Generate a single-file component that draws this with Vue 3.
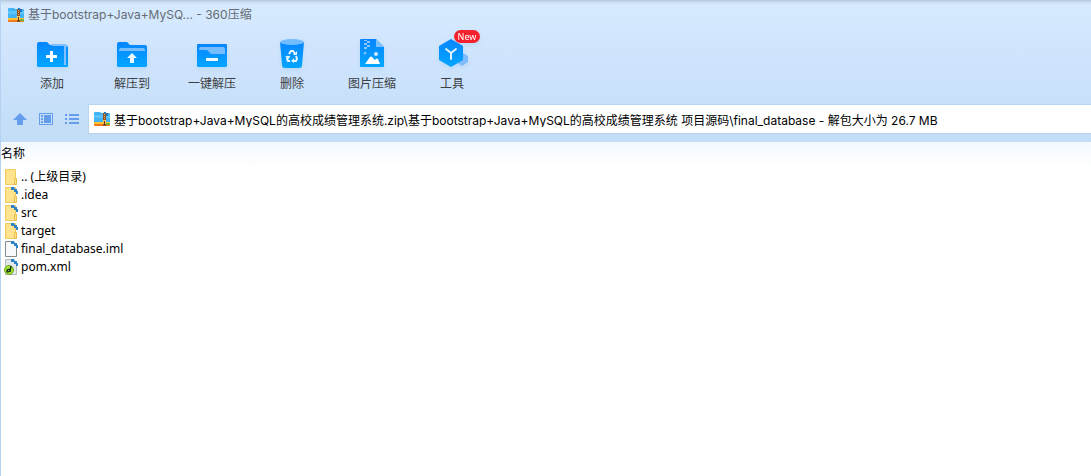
<script setup>
import { h } from 'vue'

const tools = [
  { id: 'add', label: '添加' },
  { id: 'extract', label: '解压到' },
  { id: 'quick', label: '一键解压' },
  { id: 'trash', label: '删除' },
  { id: 'image', label: '图片压缩' },
  { id: 'kit', label: '工具', badge: 'New' },
]

const files = [
  { name: '.. (上级目录)', kind: 'folder', linked: false },
  { name: '.idea', kind: 'folder', linked: true },
  { name: 'src', kind: 'folder', linked: true },
  { name: 'target', kind: 'folder', linked: true },
  { name: 'final_database.iml', kind: 'page', linked: true },
  { name: 'pom.xml', kind: 'xml', linked: true },
]

const path =
  '基于bootstrap+Java+MySQL的高校成绩管理系统.zip\\基于bootstrap+Java+MySQL的高校成绩管理系统 项目源码\\final_database - 解包大小为 26.7 MB'

const ArchiveIcon = () =>
  h('svg', { width: 16, height: 14, viewBox: '0 0 16 14', 'aria-hidden': 'true' }, [
    h('path', { d: 'M0 1q0-1 1-1h5l1 1h8q1 0 1 1v8H0z', fill: '#43b5f5' }),
    h('path', { d: 'M0 3h16v3H0z', fill: '#5bc4fa' }),
    h('path', { d: 'M0 10h16v2H0z', fill: '#fbc42f' }),
    h('path', { d: 'M0 12h16v1q0 1-1 1H1q-1 0-1-1z', fill: '#f0781d' }),
    h('path', { d: 'M12 11h4v2h-4z', fill: '#6fb53c' }),
    h('path', { d: 'M9 1h3v13H9z', fill: '#98501f' }),
    h('path', { d: 'M10 2h1v1h-1zM10 4h1v1h-1zM10 6h1v1h-1z', fill: '#e0b070' }),
    h('path', { d: 'M9 8h3v4H9z', fill: '#f7c85b' }),
    h('path', { d: 'M10 9h1v4h-1z', fill: '#6d3215' }),
    h('path', { d: 'M10 0h2v1h2v3h-2V2h-2z', fill: '#2375b8' }),
  ])
</script>

<template>
  <main class="window">
    <header class="chrome">
      <div class="titlebar">
        <ArchiveIcon />
        <h1>基于bootstrap+Java+MySQ... - 360压缩</h1>
      </div>

      <svg class="defs" width="0" height="0" aria-hidden="true">
        <defs>
          <linearGradient id="blue" x1="0" y1="0" x2="0" y2="1">
            <stop offset="0" stop-color="#0785ff" />
            <stop offset="1" stop-color="#02a6ff" />
          </linearGradient>
        </defs>
      </svg>

      <nav class="toolbar">
        <button v-for="tool in tools" :key="tool.id" type="button" class="tool">
          <span class="picture">
            <svg width="34" height="32" viewBox="0 0 34 32" aria-hidden="true">
              <g v-if="tool.id === 'add'">
                <path d="M2 5q0-2 2-2h8l3 3h15q3 0 3 3v18q0 1-1 1H3q-1 0-1-1z" fill="url(#blue)" />
                <path d="M16 5h14q2 0 2 2v1l-2-1H17z" fill="#82c0ff" />
                <path d="M29 7h2v19h-2z" fill="#82c0ff" />
                <path d="M15 12h3v4h4v3h-4v4h-3v-4h-4v-3h4z" fill="#f5fbff" />
              </g>
              <g v-else-if="tool.id === 'extract'">
                <path d="M2 5q0-2 2-2h8l3 3h15q2 0 2 2v19q0 1-1 1H3q-1 0-1-1z" fill="url(#blue)" />
                <path d="M4 11q0-2 2-2h22q2 0 2 2v1H4z" fill="#76bdff" />
                <path d="m17 14 5 5h-3v5h-4v-5h-3z" fill="#e9f7ff" />
              </g>
              <g v-else-if="tool.id === 'quick'">
                <rect x="2" y="5" width="30" height="23" rx="1" fill="url(#blue)" />
                <path d="M4 10q0-2 2-2h22q2 0 2 2v5H17q-2 0-3-2-1-2-3-2H4z" fill="#76bdff" />
                <path d="M11 19h12v3H11z" fill="#f0faff" />
              </g>
              <g v-else-if="tool.id === 'trash'">
                <path d="M5 3h24l-2 23q0 3-3 3H10q-3 0-3-3z" fill="url(#blue)" />
                <ellipse cx="17" cy="3" rx="12" ry="3" fill="#70bcff" />
                <g fill="none" stroke="#e5f6ff" stroke-width="2">
                  <path d="m14 15 2-3h2l2 3M21 17l1 3-1 2h-3M15 22h-2l-1-2 1-3" />
                </g>
                <path d="m18 16 4 0v-4zM19 19v5l-3-2zM10 17h5l-1 3z" fill="#e5f6ff" />
              </g>
              <g v-else-if="tool.id === 'image'">
                <path d="M5 1q0-1 1-1h15l8 8v19q0 1-1 1H6q-1 0-1-1z" fill="url(#blue)" />
                <path d="M21 0l8 8h-8z" fill="#7dc2ff" />
                <path d="M9 1h3v1H9zM12 2h3v2h-3zM9 4h3v2H9zM12 6h3v2h-3zM9 8h3v2H9z" fill="#86c5ff" />
                <circle cx="10" cy="14" r="1.500" fill="#75c0ff" />
                <circle cx="21" cy="15" r="2" fill="#c7eaff" />
                <path d="m10 25 5-7q1-1 2 0l3 3 1-1q1-1 2 0l2 5z" fill="#fff" />
              </g>
              <g v-else>
                <path d="m28 14 5 3v6l-6 4-6-4v-5z" fill="#7fbcff" />
                <path d="m16 0 12 7v14l-12 7-12-7V7z" fill="url(#blue)" />
                <path d="m11 10 5 4 5-4M16 14v6" fill="none" stroke="#dff2ff" stroke-width="2" stroke-linecap="round" />
              </g>
            </svg>
            <span v-if="tool.badge" class="badge">{{ tool.badge }}</span>
          </span>
          <span>{{ tool.label }}</span>
        </button>
      </nav>

      <div class="location">
        <button type="button" class="nav" aria-label="上级目录">
          <svg width="14" height="12" viewBox="0 0 14 12" aria-hidden="true">
            <path d="m7 0 7 7h-4v5H4V7H0z" fill="#649deb" />
          </svg>
        </button>
        <button type="button" class="nav" aria-label="预览">
          <svg width="14" height="12" viewBox="0 0 14 12" fill="#649deb" aria-hidden="true">
            <path d="M0 0h14v12H0zM1 1v10h12V1z" fill-rule="evenodd" />
            <path d="M2 2h2v2H2zM2 5h2v2H2zM2 8h2v2H2zM5 2h7v8H5z" />
          </svg>
        </button>
        <button type="button" class="nav" aria-label="列表">
          <svg width="14" height="12" viewBox="0 0 14 12" fill="#649deb" aria-hidden="true">
            <path d="M0 1h2v2H0zM0 5h2v2H0zM0 9h2v2H0zM4 1h10v2H4zM4 5h10v2H4zM4 9h10v2H4z" />
          </svg>
        </button>
        <label class="address">
          <ArchiveIcon />
          <input type="text" :value="path" aria-label="路径" readonly />
        </label>
      </div>
    </header>

    <table class="files">
      <thead>
        <tr><th scope="col">名称</th></tr>
      </thead>
      <tbody>
        <tr v-for="file in files" :key="file.name">
          <td>
            <div class="entry">
              <svg width="15" height="16" viewBox="0 0 15 16" aria-hidden="true">
                <g v-if="file.kind === 'folder'">
                  <path d="M1.500.500h10v15h-10z" fill="#ffe38e" stroke="#efcb5b" />
                  <path d="M10.500 9.500h2v6h-2z" fill="#ffe38e" stroke="#e9bf48" />
                </g>
                <path v-else-if="file.kind === 'page'" d="M1.500.500h7l4 4v11h-11z" fill="#f8f9fa" stroke="#858a8e" />
                <g v-else>
                  <path d="M1.500.500h7l4 4v11h-11z" fill="#e4e7ea" stroke="#b4b9be" />
                  <circle cx="5" cy="11" r="4.500" fill="#a9e432" stroke="#69a522" />
                  <path d="M7 7 6 13M6 10.500q-3-.5-3 1.500t3 0" fill="none" stroke="#15301c" stroke-width="1.500" />
                </g>
                <path v-if="file.linked" d="M7 0h3l1 2h2v2h1v3h-2V5h-2V3H7z" fill="#2d83c6" />
              </svg>
              <span>{{ file.name }}</span>
            </div>
          </td>
        </tr>
      </tbody>
    </table>
  </main>
</template>

<style>
body {
  background: #fff;
}
</style>

<style scoped>
.window {
  box-sizing: border-box;
  min-height: 100vh;
  border-left: 1px solid #b5d2f2;
  font-family: "Noto Sans", "Noto Sans CJK SC", sans-serif;
  font-size: 12px;
  color: #000;
}
.chrome {
  background: linear-gradient(#b5c8db 0, #cbdef1 2px, #d6eaff 5px, #cfe4fc 60px, #c2ddf7 142px);
}
.titlebar {
  display: flex;
  align-items: center;
  gap: 4px;
  height: 30px;
  padding-left: 7px;
}
h1 {
  margin: 0;
  font-family: Inter, "Noto Sans CJK SC", sans-serif;
  font-size: 12px;
  font-weight: 400;
  line-height: 18px;
  color: #666c74;
}
button {
  padding: 0;
  border: 0;
  background: none;
  font: inherit;
}
.defs {
  position: absolute;
}
.toolbar {
  display: flex;
  height: 74px;
  padding-left: 11px;
}
.tool {
  display: flex;
  flex-direction: column;
  align-items: center;
  gap: 4px;
  width: 80px;
  padding-top: 9px;
  line-height: 18px;
  color: #3c4043;
}
.picture {
  position: relative;
  display: flex;
  filter: drop-shadow(0 2px 2px #78b8f040);
}
.badge {
  position: absolute;
  top: -9px;
  left: 19px;
  width: 26px;
  border-radius: 7px;
  background: #f5222d;
  font-size: 9px;
  line-height: 13px;
  color: #fff;
}
.location {
  display: flex;
  align-items: center;
  height: 30px;
  padding-left: 6px;
  padding-bottom: 8px;
}
.nav {
  display: grid;
  place-items: center;
  width: 26px;
  height: 28px;
}
.address {
  display: flex;
  flex: 1;
  align-items: center;
  gap: 4px;
  min-width: 0;
  height: 28px;
  margin-left: 4px;
  padding-left: 5px;
  background: #fff;
  outline: 1px solid #b7d5f2;
}
.address svg {
  flex: none;
}
input {
  flex: 1;
  min-width: 0;
  padding: 0;
  border: 0;
  outline: 0;
  background: none;
  font-family: Inter, "Noto Sans CJK SC", sans-serif;
  font-size: 12px;
  color: #000;
}
.files {
  width: 100%;
  border-collapse: collapse;
}
th {
  height: 24px;
  padding: 0 0 2px;
  background: linear-gradient(#f2f8ff, #fff);
  font-weight: 400;
  line-height: 18px;
  text-align: left;
}
td {
  padding: 0;
}
.entry {
  display: flex;
  align-items: center;
  gap: 2px;
  height: 18px;
  padding-left: 3px;
  line-height: 18px;
}
</style>
